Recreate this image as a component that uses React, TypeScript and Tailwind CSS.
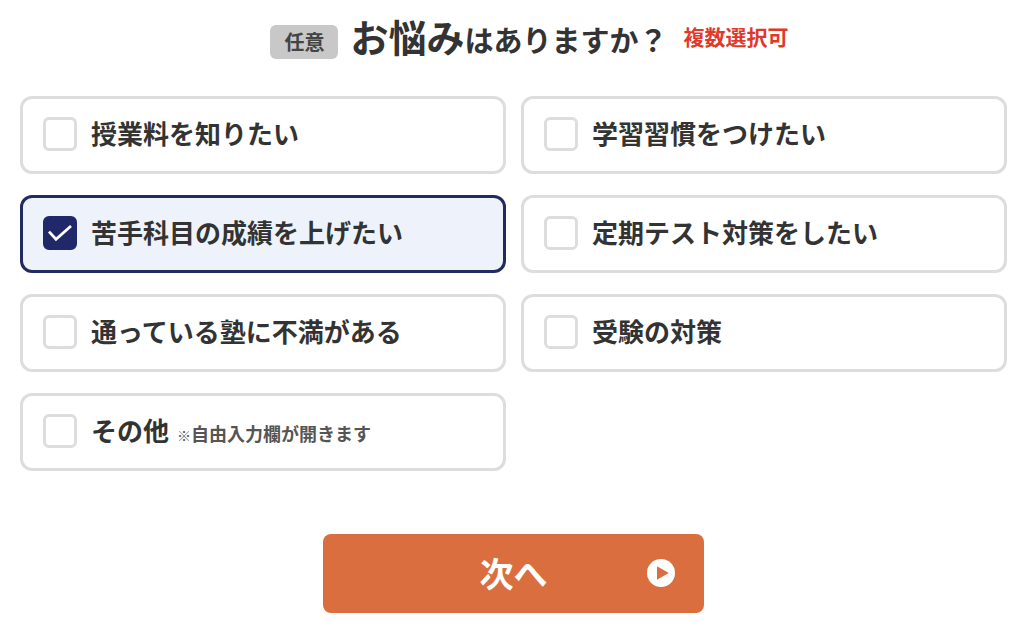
import { useState } from "react";

type Option = {
	id: string;
	label: string;
	note?: string;
};

const options: Option[] = [
	{ id: "fee", label: "授業料を知りたい" },
	{ id: "habit", label: "学習習慣をつけたい" },
	{ id: "weak", label: "苦手科目の成績を上げたい" },
	{ id: "test", label: "定期テスト対策をしたい" },
	{ id: "current", label: "通っている塾に不満がある" },
	{ id: "exam", label: "受験の対策" },
	{ id: "other", label: "その他", note: "自由入力欄が開きます" },
];

type CardProps = {
	option: Option;
	checked: boolean;
	onToggle: () => void;
};

function OptionCard({ option, checked, onToggle }: CardProps) {
	return (
		<label
			htmlFor={option.id}
			className={`flex cursor-pointer items-center gap-[14px] rounded-xl border-3 px-5 pt-[18px] pb-5 ${
				checked ? "border-[#232a60] bg-[#eef3fb]" : "border-[#dddddd] bg-white"
			}`}
		>
			<span className="grid shrink-0">
				<input
					id={option.id}
					type="checkbox"
					checked={checked}
					onChange={onToggle}
					className="col-start-1 row-start-1 size-[34px] appearance-none rounded-md border-3 border-[#dddddd] bg-white checked:border-[#20286a] checked:bg-[#20286a]"
				/>
				{checked && (
					<svg
						viewBox="0 0 34 34"
						className="pointer-events-none col-start-1 row-start-1 size-[34px]"
						fill="none"
						stroke="white"
						strokeWidth="2.8"
						aria-hidden="true"
					>
						<path d="M6 15.6 L13 23.2 L28 10" />
					</svg>
				)}
			</span>
			<span className="pb-0.5 text-[26px] leading-8">
				{option.label}
				{option.note && (
					<span className="ml-2 text-lg leading-none text-[#555555]">
						<span className="text-sm leading-none">※</span>
						{option.note}
					</span>
				)}
			</span>
		</label>
	);
}

export default function App() {
	const [selected, setSelected] = useState<string[]>(["weak"]);

	const toggle = (id: string) => {
		setSelected((prev) =>
			prev.includes(id) ? prev.filter((v) => v !== id) : [...prev, id],
		);
	};

	return (
		<form
			onSubmit={(e) => e.preventDefault()}
			className="bg-white pt-2 pr-[17px] pb-4 pl-5 font-['Noto_Sans_CJK_JP',sans-serif] font-bold text-[#333333]"
		>
			<fieldset>
				{/* heading */}
				<legend className="flex w-full items-center justify-center pb-[29px] pl-11 pr-3">
					<span className="mt-2 mr-3 rounded-md bg-[#c8c8c8] px-[14px] text-xl leading-[34px] text-[#444444]">
						任意
					</span>
					<span className="text-[29px] leading-[55px]">
						<span className="text-[38px]">お悩み</span>はありますか？
					</span>
					<span className="mb-1 ml-4 text-[21px] leading-[34px] text-[#e0392b]">
						複数選択可
					</span>
				</legend>

				{/* options */}
				<div className="grid grid-cols-2 gap-x-[15px] gap-y-[21px]">
					{options.map((option) => (
						<OptionCard
							key={option.id}
							option={option}
							checked={selected.includes(option.id)}
							onToggle={() => toggle(option.id)}
						/>
					))}
				</div>
			</fieldset>

			{/* next */}
			<button
				type="submit"
				className="mx-auto mt-[63px] grid w-full max-w-[381px] cursor-pointer grid-cols-[1fr_auto_1fr] items-center rounded-lg bg-[#db6e3e] px-[29px] pt-[15px] pb-[17px] text-white"
			>
				<span className="col-start-2 text-[34px] leading-[47px]">次へ</span>
				<svg
					viewBox="0 0 28 28"
					className="size-7 justify-self-end"
					aria-hidden="true"
				>
					<circle cx="14" cy="14" r="14" fill="white" />
					<path d="M10 7.3 L21.8 14 L10 20.7 Z" fill="#db6e3e" />
				</svg>
			</button>
		</form>
	);
}
